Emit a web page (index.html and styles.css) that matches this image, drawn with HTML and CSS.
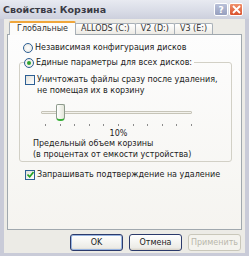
FILE: index.html
```html
<!DOCTYPE html>
<html lang="ru">
<head>
  <meta charset="UTF-8" />
  <title>Свойства: Корзина</title>
  <link rel="stylesheet" href="styles.css">
</head>
<body>
  <div class="window">
    <div class="titlebar">
      <span class="title">Свойства: Корзина</span>
      <span class="tb-btn help">?</span>
      <span class="tb-btn close">
        <svg width="9" height="9" viewBox="0 0 9 9"><path d="M1 1 L8 8 M8 1 L1 8" stroke="#fff" stroke-width="1.8"/></svg>
      </span>
    </div>

    <div class="client">
      <div class="tabs">
        <div class="tab active">Глобальные</div>
        <div class="tab">ALLODS (C:)</div>
        <div class="tab">V2 (D:)</div>
        <div class="tab">V3 (E:)</div>
      </div>

      <div class="panel">
        <label class="option">
          <span class="radio"></span>
          Независимая конфигурация дисков
        </label>

        <fieldset class="group">
          <legend class="option">
            <span class="radio checked"></span>
            Единые параметры для всех дисков:
          </legend>

          <label class="option two-line">
            <span class="checkbox"></span>
            <span>Уничтожать файлы сразу после удаления,<br>не помещая их в корзину</span>
          </label>

          <div class="slider">
            <div class="track"></div>
            <div class="thumb"></div>
            <div class="ticks">
              <i></i><i></i><i></i><i></i><i></i><i></i><i></i><i></i><i></i><i></i><i></i>
            </div>
          </div>

          <div class="percent">10%</div>
          <div class="caption">Предельный объем корзины<br>(в процентах от емкости устройства)</div>
        </fieldset>

        <label class="option confirm">
          <span class="checkbox checked">
            <svg width="7" height="7" viewBox="0 0 7 7"><path d="M0.5 3.5 L2.7 5.7 L6.5 1" fill="none" stroke="#21a121" stroke-width="1.6"/></svg>
          </span>
          Запрашивать подтверждение на удаление
        </label>
      </div>

      <div class="buttons">
        <span class="btn default">OK</span>
        <span class="btn">Отмена</span>
        <span class="btn disabled">Применить</span>
      </div>
    </div>
  </div>
</body>
</html>
```

FILE: styles.css
```css
* {
  margin: 0;
  padding: 0;
  box-sizing: border-box;
}

body {
  width: 249px;
  height: 256px;
  overflow: hidden;
  font-family: "DejaVu Sans", sans-serif;
  font-size: 8px;
  color: #222;
  background: #fff;
  white-space: nowrap;
}

.window {
  width: 249px;
  height: 256px;
  display: flex;
  flex-direction: column;
  background: #ecebe6;
  border-left: 4px solid #c9cbd8;
  border-right: 4px solid #c9cbd8;
  border-bottom: 3px solid #c9cbd8;
}

/* title bar */
.titlebar {
  height: 19px;
  margin: 0 -4px;
  padding: 0 6px 0 3px;
  display: flex;
  align-items: center;
  gap: 1px;
  background: linear-gradient(#e8eaf1, #d8dbe6 60%, #cdd0dd);
}

.title {
  flex: 1;
  font-weight: bold;
  font-size: 9.5px;
  color: #3a3a44;
}

.tb-btn {
  width: 14px;
  height: 13px;
  border-radius: 2px;
  display: flex;
  align-items: center;
  justify-content: center;
  border: 1px solid #fff;
}

.help {
  background: linear-gradient(#b9c0d8, #97a0bf);
  color: #fff;
  font-weight: bold;
  font-size: 9px;
}

.close {
  background: linear-gradient(#f0906c, #d9522e);
}

/* client area */
.client {
  flex: 1;
  display: flex;
  flex-direction: column;
  padding: 1px 3px 0 3px;
}

.tabs {
  display: flex;
  align-items: flex-end;
  height: 14px;
  padding-left: 2px;
}

.tab {
  height: 11px;
  padding: 0 5px;
  line-height: 10px;
  border: 1px solid #a8b0b8;
  border-bottom: none;
  border-radius: 2px 2px 0 0;
  background: linear-gradient(#fff, #eceae4);
  margin-right: -1px;
  color: #333;
}

.tab.active {
  height: 14px;
  padding: 0 7px;
  line-height: 12px;
  border-top: 2px solid #f0a63a;
  background: #fcfcfb;
  position: relative;
  z-index: 1;
  margin-bottom: -1px;
}

.panel {
  height: 196px;
  border: 1px solid #a0a8ae;
  background: linear-gradient(#fdfdfd, #f5f4f0);
  padding: 7px 9px 0 9px;
}

.option {
  display: flex;
  align-items: center;
  gap: 2px;
  height: 11px;
  margin-left: 6px;
}

.radio {
  flex: none;
  width: 10px;
  height: 10px;
  border-radius: 50%;
  border: 1px solid #2c5f94;
  background: radial-gradient(#fff, #e4e3dc);
  display: flex;
  align-items: center;
  justify-content: center;
}

.radio.checked::after {
  content: "";
  width: 4px;
  height: 4px;
  border-radius: 50%;
  background: #2fa32f;
}

.checkbox {
  flex: none;
  width: 10px;
  height: 10px;
  border: 1px solid #2c5f94;
  background: linear-gradient(135deg, #e2e1da, #fff);
  display: flex;
  align-items: center;
  justify-content: center;
}

.group {
  margin-top: 4px;
  margin-left: 2px;
  padding-bottom: 1px;
  border: 1px solid #d2d0c6;
  border-radius: 3px;
  min-width: 0;
}

.group legend {
  margin-left: 4px;
  padding-right: 2px;
}

.two-line {
  height: auto;
  align-items: flex-start;
  margin-top: 6px;
  margin-left: 5px;
  line-height: 11px;
}

.two-line .checkbox {
  margin-top: 1px;
}

.slider {
  position: relative;
  height: 30px;
  margin: 2px 39px 0 21px;
}

.track {
  position: absolute;
  top: 13px;
  left: 0;
  right: 0;
  height: 3px;
  border: 1px solid #c6c4b8;
  border-radius: 1px;
  background: #f3f2ec;
}

/* slider thumb sits over the track */
.thumb {
  position: absolute;
  top: 6px;
  left: 15px;
  width: 9px;
  height: 17px;
  border: 1px solid #8d9a8c;
  border-radius: 2px 2px 4px 4px;
  background: linear-gradient(90deg, #fff, #e3e6d9);
  border-bottom: 2px solid #38b038;
}

.ticks {
  position: absolute;
  top: 26px;
  left: 4px;
  right: 0;
  display: flex;
  justify-content: space-between;
}

.ticks i {
  width: 1px;
  height: 2px;
  background: #8c8c8c;
}

.percent {
  margin-top: 1px;
  text-align: center;
  padding-right: 14px;
}

.caption {
  margin-left: 13px;
  line-height: 11px;
}

.confirm {
  margin-top: 7px;
  margin-left: 8px;
}

.buttons {
  display: flex;
  justify-content: flex-end;
  gap: 6px;
  padding: 4px 1px 0 0;
}

.btn {
  width: 53px;
  height: 17px;
  display: flex;
  align-items: center;
  justify-content: center;
  border: 1px solid #2b3a6b;
  border-radius: 3px;
  background: linear-gradient(#fff, #ecebe6 85%, #d6d0c5);
  color: #222;
}

.btn.default {
  box-shadow: inset 0 0 0 1px #98b4e0;
}

.btn.disabled {
  border-color: #c9c7ba;
  color: #b9b7ac;
  background: #f4f3ee;
}
```
